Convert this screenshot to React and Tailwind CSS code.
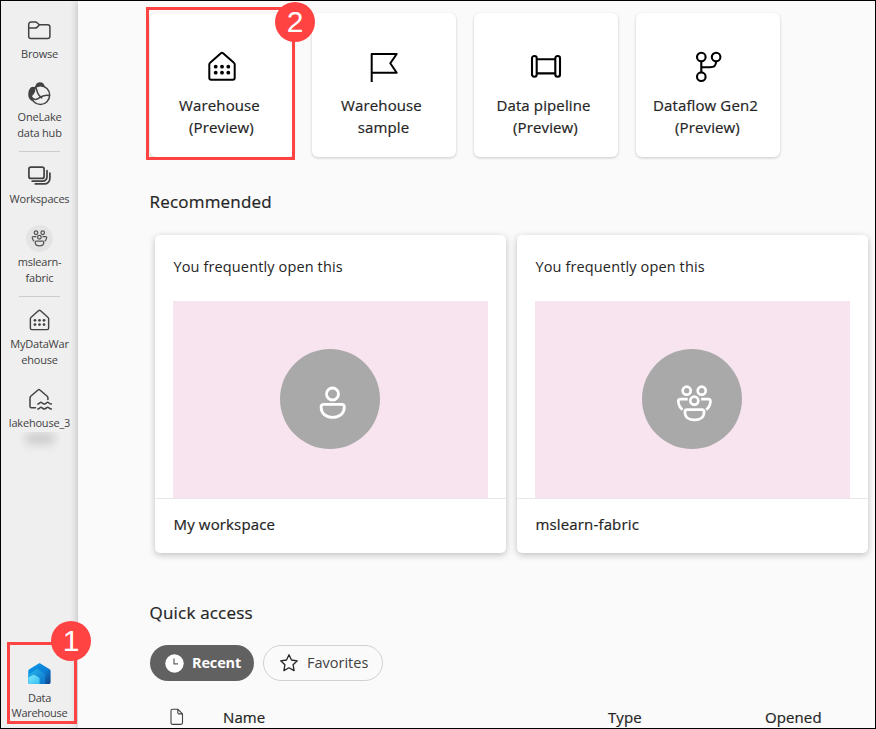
const WarehouseIcon = ({ size }) => (
  <svg width={size} height={size} viewBox="0 0 32 32" fill="none" stroke="currentColor" strokeWidth="2" strokeLinejoin="round">
    <path d="M5.2 28.7h21.6a1.9 1.9 0 0 0 1.9-1.9V13.6c0-.9-.4-1.6-1.1-2.1L17.1 2.2a1.8 1.8 0 0 0-2.2 0L4.4 11.5c-.7.5-1.1 1.2-1.1 2.1v13.2c0 1 .9 1.9 1.9 1.9Z" />
    <g fill="currentColor" stroke="none">
      <circle cx="9.7" cy="15.7" r="1.9" /><circle cx="16" cy="15.7" r="1.9" /><circle cx="22.3" cy="15.7" r="1.9" />
      <circle cx="9.7" cy="21.7" r="1.9" /><circle cx="16" cy="21.7" r="1.9" /><circle cx="22.3" cy="21.7" r="1.9" />
    </g>
  </svg>
);

const FlagIcon = () => (
  <svg width="32" height="32" viewBox="0 0 32 32" fill="none" stroke="currentColor" strokeWidth="2" strokeLinejoin="round">
    <path d="M3.7 31V3h25l-6.4 9.3 6.4 9.4h-25" />
  </svg>
);

const PipelineIcon = () => (
  <svg width="32" height="32" viewBox="0 0 32 32" fill="none" stroke="currentColor" strokeWidth="2.1">
    <rect x="2" y="5" width="4.7" height="20.7" rx="2.2" />
    <rect x="25.3" y="5" width="4.7" height="20.7" rx="2.2" />
    <path d="M6.7 8.3h18.6M6.7 22.4h18.6" />
  </svg>
);

const DataflowIcon = () => (
  <svg width="32" height="32" viewBox="0 0 32 32" fill="none" stroke="currentColor" strokeWidth="2.1">
    <circle cx="9.3" cy="6" r="4.3" />
    <circle cx="24.1" cy="6" r="4.3" />
    <circle cx="9.3" cy="25.7" r="4.3" />
    <path d="M9.3 10.3v11.1M24.1 10.3c0 4.4-2 6-6 6H9.3" />
  </svg>
);

const FolderIcon = () => (
  <svg width="25" height="24" viewBox="0 0 25 24" fill="none" stroke="currentColor" strokeWidth="1.5" strokeLinejoin="round">
    <path d="M4 3.1h4.6c.6 0 1.1.2 1.5.6l2.2 2.1h8.3a2.3 2.3 0 0 1 2.3 2.3v9.1a2.3 2.3 0 0 1-2.3 2.3H4a2.3 2.3 0 0 1-2.3-2.3V5.4A2.3 2.3 0 0 1 4 3.1Z" />
    <path d="M1.8 9.1h6.5c.7 0 1.2-.2 1.7-.7l2.3-2.4" />
  </svg>
);

const OneLakeIcon = () => (
  <svg width="25" height="24" viewBox="0 0 25 24" fill="none" stroke="currentColor" strokeWidth="1.5" strokeLinecap="round">
    <ellipse cx="5.8" cy="12" rx="4.6" ry="7.2" fill="currentColor" stroke="none" />
    <circle cx="13" cy="4.8" r="4.6" fill="currentColor" stroke="none" />
    <circle cx="13.4" cy="13.1" r="9.3" fill="#efefef" />
    <path d="M4.6 12c0-3 1.7-5.6 4.2-7l1.7 5.5c.8 2.2 2.2 4 4.2 5.4" />
    <path d="M4.8 15.5c1.600 1.900 4.200 2.500 6.200 1.200 2.600-1.700 5.200-4.600 11.300-3.200" />
    <path d="M4.7 14.5c-.6-3.500.6-7 3.600-9.200.5 3.500-.5 6.500-3.600 9.200Z" fill="currentColor" stroke="none" />
  </svg>
);

const WorkspacesIcon = () => (
  <svg width="25" height="24" viewBox="0 0 25 24" fill="none" stroke="currentColor" strokeWidth="1.7" strokeLinecap="round">
    <rect x="1.9" y="3.1" width="15.2" height="11.3" rx="2" />
    <path d="M20 6.5v6.3a4.3 4.3 0 0 1-4.300 4.400H5.200M22.900 9v5.400a5.500 5.500 0 0 1-5.500 5.500H8.300" />
  </svg>
);

const LakehouseIcon = () => (
  <svg width="25" height="24" viewBox="0 0 25 24" className="overflow-visible" fill="none" stroke="currentColor" strokeWidth="1.5" strokeLinecap="round" strokeLinejoin="round">
    <path d="M8.500 19.800H4.400A1.400 1.400 0 0 1 3 18.400V9.700c0-.6.2-1 .7-1.400l7.300-6.300a1.400 1.400 0 0 1 1.900 0l7.300 6.300c.4.400.7.800.7 1.400v1.800" />
    <path d="M10.800 16c1.700 0 2-1.700 3.100-1.700s1.500 1.700 3.400 1.700 2.200-1.700 3.400-1.700 1.500 1.700 3.700 1.700M10.800 20.900c1.700 0 2-1.700 3.100-1.700s1.500 1.700 3.400 1.700 2.200-1.700 3.400-1.700 1.500 1.700 3.700 1.700" />
  </svg>
);

const PeoplePaths = () => (
  <>
    <circle cx="44.7" cy="41.7" r="4" />
    <circle cx="59.7" cy="41.7" r="4" />
    <circle cx="52.3" cy="51.7" r="4" />
    <path d="M45.700 50.200h-7.200c-1.600 0-2.300.8-2.200 2.200.3 3.700 1.600 6.400 4.300 8.300M59.100 50.200h7.200c1.600 0 2.300.8 2.200 2.200-.3 3.700-1.600 6.400-4.300 8.300" />
    <path d="M45.100 60.600h14.800c1.500 0 2.200.8 2.200 2.300 0 5.300-4.100 8-9.600 8s-9.600-2.700-9.600-8c0-1.500.7-2.300 2.200-2.300Z" />
  </>
);

const PersonArt = () => (
  <svg width="100" height="100" viewBox="0 0 100 100" fill="none" stroke="white" strokeWidth="2.8">
    <circle cx="52.5" cy="45" r="6" />
    <path d="M43.800 55.300h17.800c1.800 0 2.700 1 2.700 2.700 0 6.500-4.800 10.400-11.600 10.400s-11.600-3.900-11.600-10.400c0-1.700.9-2.700 2.700-2.700Z" />
  </svg>
);

const PeopleArt = () => (
  <svg width="100" height="100" viewBox="0 0 100 100" fill="none" stroke="white" strokeWidth="2.7"><PeoplePaths /></svg>
);

const DataWarehouseLogo = () => (
  <svg width="25" height="24" viewBox="0 0 25 24">
    <defs>
      <linearGradient id="roof" x1="0" y1="0" x2="1" y2="1"><stop offset="0" stopColor="#0b9be8" /><stop offset=".55" stopColor="#0b80d6" /><stop offset="1" stopColor="#123f86" /></linearGradient>
      <linearGradient id="mid" x1="0" y1="0" x2="1" y2="1"><stop offset="0" stopColor="#28b8ee" /><stop offset="1" stopColor="#0a72c9" /></linearGradient>
      <linearGradient id="front" x1="0" y1="0" x2="1" y2="1"><stop offset="0" stopColor="#7ee9ff" /><stop offset="1" stopColor="#35bdf0" /></linearGradient>
    </defs>
    <path d="M1.300 9c0-.8.300-1.400 1-1.800L11.400 1.700c.8-.5 1.500-.5 2.300 0l9 5.500c.6.400.9 1 .9 1.800v11.300c0 1.100-.7 1.800-1.800 1.800H3.100c-1.100 0-1.800-.7-1.800-1.800Z" fill="url(#roof)" />
    <path d="M1.300 12.400 9.200 7.600c.7-.4 1.200-.4 1.900 0l6.200 3.900c.6.400.9.900.9 1.600v9H3.100c-1.100 0-1.800-.7-1.800-1.800Z" fill="url(#mid)" />
    <path d="M1.300 15.500 6 12.900c.6-.3 1-.3 1.600 0l4.200 2.500c.6.300.8.800.8 1.400v5.300H3.100c-1.100 0-1.800-.7-1.800-1.800Z" fill="url(#front)" />
  </svg>
);

const NavItem = ({ icon, lines, spacing = "" }) => (
  <div className={"flex flex-col items-center gap-[3px] text-[11px] leading-4 tracking-[-0.2px] text-[#424242] " + spacing}>
    <div className="flex h-6 w-[25px] justify-center">{icon}</div>
    <div className="text-center whitespace-nowrap">{lines.map((l) => <div key={l}>{l}</div>)}</div>
  </div>
);

const Tile = ({ icon, lines }) => (
  <div className="flex h-36 w-36 flex-col items-center rounded-md bg-white pt-[38px] text-[#242424] shadow-[0_1px_3px_rgba(0,0,0,0.2)]">
    <div className="text-black">{icon}</div>
    <div className="mt-[11px] text-center text-[15px] leading-[22px] tracking-[0.12px] whitespace-nowrap [-webkit-text-stroke:0.2px]">
      <div className="pr-[5px]">{lines[0]}</div>
      <div className="pr-px">{lines[1]}</div>
    </div>
  </div>
);

const Recommendation = ({ art, name }) => (
  <div className="flex h-[318px] w-[351px] shrink-0 flex-col rounded-[5px] bg-white text-[#242424] shadow-[0_2px_7px_rgba(0,0,0,0.24)]">
    <div className="h-[66px] pt-[21px] pl-[18.5px] text-[14.5px] leading-[22px] tracking-[0.13px]">You frequently open this</div>
    <div className="mx-[18px] flex h-[197px] items-center justify-center bg-[#f8e4ef] pr-px pb-[2px]">
      <div className="h-[100px] w-[100px] rounded-full bg-[#a9a9a9]">{art}</div>
    </div>
    <div className="flex-1 border-t border-[#e8e8e8] pt-[14px] pl-[18.5px] text-[15px] leading-[22px] tracking-[0.15px] [-webkit-text-stroke:0.2px]">{name}</div>
  </div>
);

const Badge = ({ label, place }) => (
  <div className={"absolute flex h-10 w-10 items-center justify-center rounded-full bg-[#ff4343] font-['Liberation_Sans',sans-serif] text-[30px] leading-10 text-white " + place}>{label}</div>
);

export default function App() {
  return (
    <div className="relative flex h-[729px] w-[876px] overflow-hidden border border-black bg-[#fafafa] font-['Open_Sans','Noto_Sans',sans-serif]">
      <nav className="flex w-[77px] shrink-0 flex-col items-center bg-[#efefef] pt-[18px]">
        <NavItem icon={<FolderIcon />} lines={["Browse"]} />
        <NavItem icon={<OneLakeIcon />} lines={["OneLake", "data hub"]} spacing="mt-5" />
        <div className="mt-[10px] h-px w-[41px] bg-[#cccccc]" />
        <NavItem icon={<WorkspacesIcon />} lines={["Workspaces"]} spacing="mt-3" />
        <NavItem
          icon={
            <div className="-mt-[2px] flex h-[27px] w-[27px] shrink-0 items-center justify-center rounded-full bg-[#e4e4e4]">
              <svg width="17" height="17" viewBox="33.5 35.5 38 38" fill="none" stroke="#555" strokeWidth="2.8"><PeoplePaths /></svg>
            </div>
          }
          lines={["mslearn-", "fabric"]}
          spacing="mt-5"
        />
        <div className="mt-[10px] h-px w-[41px] bg-[#cccccc]" />
        <NavItem icon={<WarehouseIcon size={23} />} lines={["MyDataWar", "ehouse"]} spacing="mt-3" />
        <NavItem icon={<LakehouseIcon />} lines={["lakehouse_3"]} spacing="mt-5" />
        <div className="mt-[1px] flex h-[22px] w-10 justify-center overflow-hidden">
          <div className="mt-[1px] h-[11px] w-[30px] rounded-full bg-[#cacaca] blur-[5px]" />
        </div>
        <div className="mt-auto flex flex-col items-center pb-[8px] text-[11px] leading-[15px] tracking-[-0.3px] text-[#424242]">
          <DataWarehouseLogo />
          <div className="mt-[4px] text-center"><div>Data</div><div>Warehouse</div></div>
        </div>
      </nav>

      <main className="flex min-w-0 flex-1 flex-col bg-[#fafafa] pt-3 pl-[72px] shadow-[0_0_8px_rgba(0,0,0,0.25)]">
        <div className="flex gap-[18px]">
          <Tile icon={<WarehouseIcon size={32} />} lines={["Warehouse", "(Preview)"]} />
          <Tile icon={<FlagIcon />} lines={["Warehouse", "sample"]} />
          <Tile icon={<PipelineIcon />} lines={["Data pipeline", "(Preview)"]} />
          <Tile icon={<DataflowIcon />} lines={["Dataflow Gen2", "(Preview)"]} />
        </div>

        <h2 className="mt-[33px] -ml-[0.5px] text-[17px] leading-6 tracking-[0.2px] text-[#242424] [-webkit-text-stroke:0.2px]">Recommended</h2>
        <div className="mt-[21px] flex gap-[11px] pl-[5px]">
          <Recommendation art={<PersonArt />} name="My workspace" />
          <Recommendation art={<PeopleArt />} name="mslearn-fabric" />
        </div>

        <h2 className="mt-12 -ml-[0.5px] text-[17px] leading-6 tracking-[0.2px] text-[#242424] [-webkit-text-stroke:0.2px]">Quick access</h2>
        <div className="mt-5 flex gap-[9px] text-[14.5px]">
          <div className="flex h-9 w-[104px] items-center gap-2 rounded-full bg-[#616161] pl-[15px] font-bold tracking-[-0.15px] text-white">
            <svg width="19" height="19" viewBox="0 0 19 19" fill="none"><circle cx="9.5" cy="9.5" r="9.2" fill="white" /><path d="M9 4.5v5.3h4" stroke="#616161" strokeWidth="1.2" /></svg>
            Recent
          </div>
          <div className="flex h-9 w-[120px] items-center gap-2 rounded-full border border-[#d1d1d1] pl-[15px] text-[#424242]">
            <svg width="20" height="20" viewBox="0 0 20 20" fill="none" stroke="#242424" strokeWidth="1.3" strokeLinejoin="round"><path d="m10 1.800 2.500 5.200 5.800.8-4.200 4 1 5.800-5.100-2.800-5.100 2.800 1-5.800-4.200-4 5.800-.8Z" /></svg>
            Favorites
          </div>
        </div>
        <div className="mt-[25px] flex h-[22px] shrink-0 text-[15px] leading-[22px] tracking-[0.1px] text-[#242424] [-webkit-text-stroke:0.2px]">
          <div className="w-[73px] pt-[2px] pl-[20px]">
            <svg width="14" height="18" viewBox="0 0 14 18" fill="none" stroke="#424242" strokeWidth="1.1" strokeLinejoin="round"><path d="M2.600 1.200h5.200l4.700 4.700v8.900c0 1-.6 1.600-1.600 1.600H2.600c-1 0-1.600-.6-1.600-1.600v-12c0-1 .6-1.600 1.600-1.600ZM7.800 1.200v3.500c0 .8.400 1.200 1.200 1.200h3.500" /></svg>
          </div>
          <div className="w-[385px]">Name</div>
          <div className="w-[157px]">Type</div>
          <div>Opened</div>
        </div>
      </main>

      <div className="absolute top-[6px] left-[145px] h-[153px] w-[149px] border-[3px] border-[#ff4343]" />
      <Badge label="2" place="top-[1px] left-[274px]" />
      <div className="absolute top-[641px] left-[6px] h-[82px] w-[70px] border-[3px] border-[#ff4343]" />
      <Badge label="1" place="top-[620px] left-[50px]" />
    </div>
  );
}
